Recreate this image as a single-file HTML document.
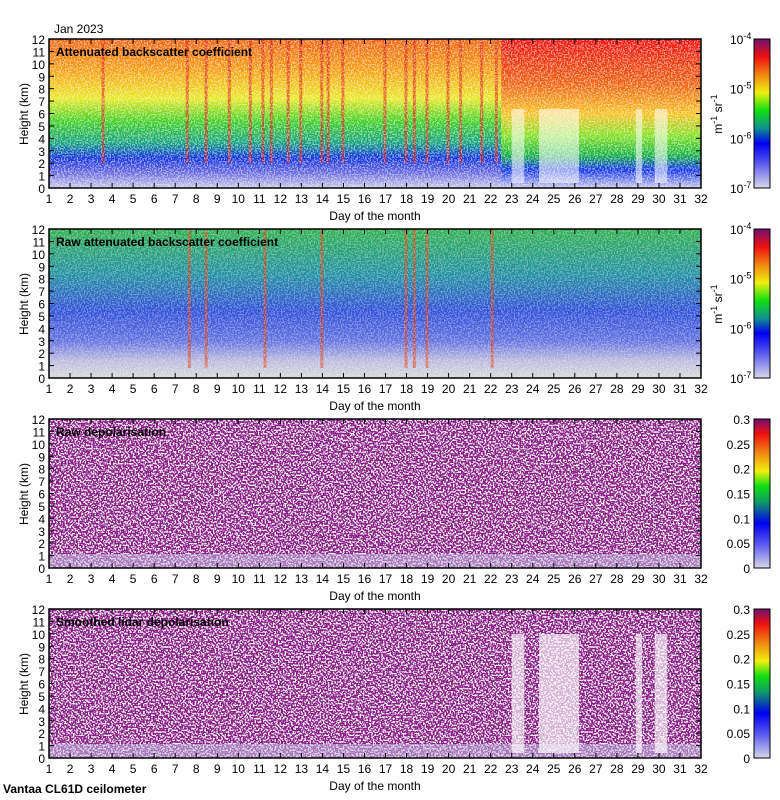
<!DOCTYPE html>
<html><head><meta charset="utf-8"><style>
html,body{margin:0;padding:0;background:#fff;width:780px;height:800px;overflow:hidden}
svg{position:absolute;left:0;top:0}
text{font-family:"Liberation Sans",sans-serif;fill:#000}
</style></head><body>
<svg id="s" width="780" height="800" xmlns="http://www.w3.org/2000/svg">
<defs>
<linearGradient id="g1" x1="0" y1="0" x2="0" y2="1">
<stop offset="0" stop-color="#f06010"/><stop offset="0.2" stop-color="#f79a10"/>
<stop offset="0.4" stop-color="#e8e820"/><stop offset="0.55" stop-color="#40d020"/>
<stop offset="0.7" stop-color="#10a080"/><stop offset="0.8" stop-color="#1030e0"/>
<stop offset="0.9" stop-color="#6868e0"/><stop offset="1" stop-color="#c8c8e8"/></linearGradient>
<linearGradient id="g1b" x1="0" y1="0" x2="0" y2="1">
<stop offset="0" stop-color="#ee1010"/><stop offset="0.3" stop-color="#f06010"/>
<stop offset="0.5" stop-color="#f8c020"/><stop offset="0.65" stop-color="#80e020"/>
<stop offset="0.78" stop-color="#10b040"/><stop offset="0.88" stop-color="#1030f0"/>
<stop offset="1" stop-color="#c8c8e8"/></linearGradient>
<linearGradient id="g2" x1="0" y1="0" x2="0" y2="1">
<stop offset="0" stop-color="#30b050"/><stop offset="0.3" stop-color="#2090a0"/>
<stop offset="0.55" stop-color="#3050d8"/><stop offset="0.75" stop-color="#6070e0"/>
<stop offset="0.88" stop-color="#b8b8e0"/><stop offset="1" stop-color="#d8d8d8"/></linearGradient>
<linearGradient id="cb1" x1="0" y1="1" x2="0" y2="0">
<stop offset="0" stop-color="#d8d8e8"/><stop offset="0.2" stop-color="#4040f0"/>
<stop offset="0.3" stop-color="#0000f0"/><stop offset="0.4" stop-color="#109090"/>
<stop offset="0.52" stop-color="#10e010"/><stop offset="0.64" stop-color="#f0f010"/>
<stop offset="0.75" stop-color="#f09010"/><stop offset="0.88" stop-color="#f01010"/>
<stop offset="1" stop-color="#701070"/></linearGradient>
<linearGradient id="cb2" x1="0" y1="1" x2="0" y2="0">
<stop offset="0" stop-color="#d8d8e8"/><stop offset="0.15" stop-color="#6060f0"/>
<stop offset="0.3" stop-color="#0000f0"/><stop offset="0.45" stop-color="#10a060"/>
<stop offset="0.55" stop-color="#10e010"/><stop offset="0.65" stop-color="#f0f010"/>
<stop offset="0.78" stop-color="#f08010"/><stop offset="0.9" stop-color="#f01010"/>
<stop offset="1" stop-color="#701070"/></linearGradient>
<filter id="nz" x="0" y="0" width="100%" height="100%">
<feTurbulence type="fractalNoise" baseFrequency="0.7" numOctaves="1" seed="3"/>
<feColorMatrix type="matrix" values="0 0 0 0 1  0 0 0 0 1  0 0 0 0 1  -9 0 0 0 4.7"/>
</filter>
<filter id="pz" x="0" y="0" width="100%" height="100%">
<feTurbulence type="fractalNoise" baseFrequency="0.6" numOctaves="1" seed="7"/>
<feColorMatrix type="matrix" values="0 0 0 0 0.86  0 0 0 0 0.86  0 0 0 0 0.86  -12 0 0 0 6.2"/>
</filter>
</defs>
<g id="p"></g>
</svg>
<script>
var g=document.getElementById('p'),h='';
var X0=49,X1=701,W=X1-X0,H=149;
var tops=[39,229,419,609];
var titles=['Attenuated backscatter coefficient','Raw attenuated backscatter coefficient','Raw depolarisation','Smoothed lidar depolarisation'];
function dx(d){return X0+(d-1)*W/31}
var gaps=[[23,23.6],[24.3,26.2],[28.9,29.2],[29.8,30.4]];
for(var p=0;p<4;p++){
 var T=tops[p],B=T+H;
 if(p==0){
  h+='<rect x="'+X0+'" y="'+T+'" width="'+W+'" height="'+H+'" fill="url(#g1)"/>';
  h+='<rect x="'+dx(22.5)+'" y="'+T+'" width="'+(X1-dx(22.5))+'" height="'+H+'" fill="url(#g1b)"/>';
  var st=[3.5,7.5,8.4,9.5,10.5,11.1,11.5,12.3,12.9,13.9,14.2,14.9,16.9,17.9,18.3,18.9,19.9,20.5,21.5,22.2];
  st.forEach(function(d){h+='<rect x="'+dx(d)+'" y="'+T+'" width="3" height="'+(H-25)+'" fill="#e02010" opacity="0.6"/>';});
  gaps.forEach(function(a){h+='<rect x="'+dx(a[0])+'" y="'+(T+70)+'" width="'+(dx(a[1])-dx(a[0]))+'" height="'+(H-75)+'" fill="#fff" opacity="0.55"/>';});
  h+='<rect x="'+X0+'" y="'+T+'" width="'+W+'" height="'+H+'" filter="url(#nz)" opacity="0.5"/>';
 }else if(p==1){
  h+='<rect x="'+X0+'" y="'+T+'" width="'+W+'" height="'+H+'" fill="url(#g2)"/>';
  [7.6,8.4,11.2,13.9,17.9,18.3,18.9,22].forEach(function(d){h+='<rect x="'+dx(d)+'" y="'+T+'" width="3" height="'+(H-10)+'" fill="#e04010" opacity="0.55"/>';});
  h+='<rect x="'+X0+'" y="'+T+'" width="'+W+'" height="'+H+'" filter="url(#nz)" opacity="0.35"/>';
 }else{
  h+='<rect x="'+X0+'" y="'+T+'" width="'+W+'" height="'+H+'" fill="#8a1a88"/>';
  h+='<rect x="'+X0+'" y="'+T+'" width="'+W+'" height="'+H+'" filter="url(#pz)"/>';
  h+='<rect x="'+X0+'" y="'+(B-14)+'" width="'+W+'" height="14" fill="#c8c8e8" opacity="0.5"/>';
  if(p==3)gaps.forEach(function(a){h+='<rect x="'+dx(a[0])+'" y="'+(T+25)+'" width="'+(dx(a[1])-dx(a[0]))+'" height="'+(H-30)+'" fill="#fff" opacity="0.65"/>';});
 }
 h+='<rect x="'+X0+'" y="'+T+'" width="'+W+'" height="'+H+'" fill="none" stroke="#000" stroke-width="1.5"/>';
 h+='<text x="56" y="'+(T+17)+'" font-size="12" font-weight="bold">'+titles[p]+'</text>';
 for(var k=0;k<=12;k++){var y=B-k*H/12;
  h+='<line x1="'+X0+'" x2="'+(X0+5)+'" y1="'+y+'" y2="'+y+'" stroke="#000"/><line x1="'+(X1-5)+'" x2="'+X1+'" y1="'+y+'" y2="'+y+'" stroke="#000"/>';
  h+='<text x="'+(X0-4)+'" y="'+(y+5)+'" font-size="12" text-anchor="end">'+k+'</text>';}
 for(var d=1;d<=32;d++){var x=dx(d);
  h+='<line x1="'+x+'" x2="'+x+'" y1="'+B+'" y2="'+(B-5)+'" stroke="#000"/><line x1="'+x+'" x2="'+x+'" y1="'+T+'" y2="'+(T+5)+'" stroke="#000"/>';
  h+='<text x="'+x+'" y="'+(B+15)+'" font-size="12" text-anchor="middle">'+d+'</text>';}
 h+='<text x="375" y="'+(B+32)+'" font-size="12" text-anchor="middle">Day of the month</text>';
 h+='<text transform="translate(28,'+(T+75)+') rotate(-90)" font-size="12" text-anchor="middle">Height (km)</text>';
 h+='<rect x="754" y="'+T+'" width="16" height="'+H+'" fill="url(#'+(p<2?'cb1':'cb2')+')" stroke="#000"/>';
 if(p<2){
  ['-7','-6','-5','-4'].forEach(function(e,i){var y=B-i*H/3;h+='<text x="730" y="'+(y+5)+'" font-size="12">10<tspan dy="-5" font-size="9">'+e+'</tspan></text>';});
  h+='<text transform="translate(722,'+(T+75)+') rotate(-90)" font-size="12" text-anchor="middle">m<tspan dy="-5" font-size="9">-1</tspan><tspan dy="5"> sr</tspan><tspan dy="-5" font-size="9">-1</tspan></text>';
 }else{
  ['0','0.05','0.1','0.15','0.2','0.25','0.3'].forEach(function(v,i){var y=B-i*H/6;h+='<text x="750" y="'+(y+5)+'" font-size="12" text-anchor="end">'+v+'</text>';});
 }
}
h+='<text x="54" y="33" font-size="12">Jan 2023</text>';
h+='<text x="3" y="793" font-size="12" font-weight="bold">Vantaa CL61D ceilometer</text>';
g.innerHTML=h;
</script>
</body></html>
